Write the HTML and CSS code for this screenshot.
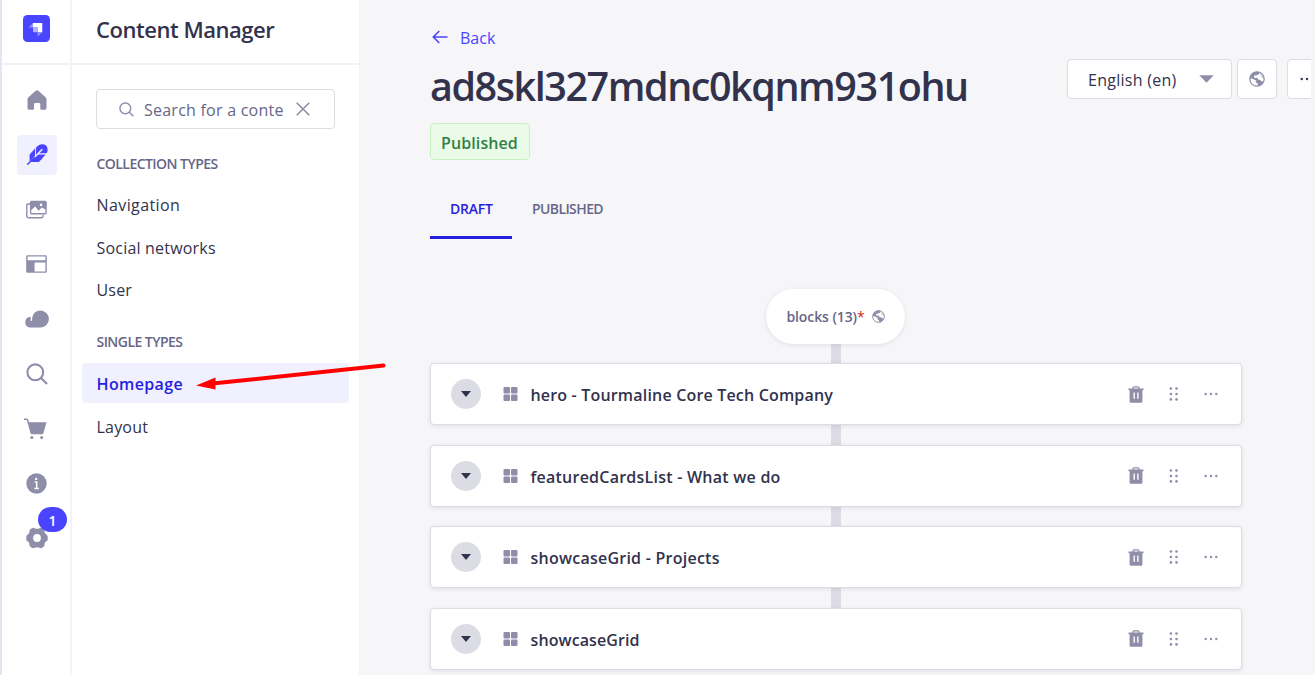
FILE: index.html
```html
<!DOCTYPE html>
<html lang="en">
<head>
<meta charset="utf-8">
<title>Content Manager</title>
<link rel="stylesheet" href="styles.css">
</head>
<body>
<svg class="sprite" aria-hidden="true">
  <symbol id="globe" viewBox="0 0 16 16"><circle cx="8" cy="8" r="7.2" fill="#fff" stroke="currentColor" stroke-width="1.2"/><path fill="currentColor" d="M1 9.200C.4 5 3.500.9 8 .7l2.500.6-.3 1.700-2.400 1.200-2.300.4-.8 1.500 1.200.9 2-.2 1.300 1.300-.4 1H5.900L3 7.600l-1.500-.2z"/><path fill="currentColor" d="M6.600 9.700l2-1.200 2.700.4 1 1.400 2.200.2-.9 2.200-2.700 2.100-2 .3-.3-2.500-1.800-1.300z"/><path fill="currentColor" d="M11.500 2l2.300 1.900 1.300 3.600-2.100-.3-1.500-2.200z" opacity=".35"/></symbol>
  <symbol id="grid" viewBox="0 0 14 14"><g fill="currentColor"><rect width="6.500" height="6.500" rx="1"/><rect x="7.500" width="6.500" height="6.500" rx="1"/><rect y="7.500" width="6.500" height="6.500" rx="1"/><rect x="7.500" y="7.500" width="6.500" height="6.500" rx="1"/></g></symbol>
  <symbol id="trash" viewBox="0 0 16 17"><path d="M5 3V1.800Q5 .8 6 .8h4q1 0 1 1V3" fill="none" stroke="currentColor" stroke-width="1.200"/><path fill="currentColor" fill-rule="evenodd" d="M.5 2.600h15v1.600h-1.100V15.500q0 1.300-1.200 1.300H2.800q-1.200 0-1.200-1.300V4.200H.5zM5.500 6.500v6.300h1.400V6.500zM9.200 6.500v6.300h1.400V6.500z"/></symbol>
  <symbol id="drag" viewBox="0 0 10 14"><g fill="currentColor"><circle cx="1.900" cy="1.500" r="1.300"/><circle cx="7.500" cy="1.500" r="1.300"/><circle cx="1.900" cy="7" r="1.300"/><circle cx="7.500" cy="7" r="1.300"/><circle cx="1.900" cy="12.400" r="1.300"/><circle cx="7.500" cy="12.400" r="1.300"/></g></symbol>
  <symbol id="dots" viewBox="0 0 14 4"><g fill="currentColor"><circle cx="1.700" cy="2" r="1.200"/><circle cx="7" cy="2" r="1.200"/><circle cx="12.300" cy="2" r="1.200"/></g></symbol>
  <symbol id="search" viewBox="0 0 22 22"><circle cx="9.300" cy="9.300" r="7.900" fill="none" stroke="currentColor" stroke-width="2.100"/><path d="M15 15l6 6" stroke="currentColor" stroke-width="2.100" fill="none"/></symbol>
</svg>
<div class="app">
  <nav class="rail">
    <div class="rail-logo">
      <svg width="27" height="27" viewBox="0 0 27 27"><rect width="27" height="27" rx="4.500" fill="#4945ff"/><path fill="#fff" d="M10 8h9.300v9.200h-4.700v-4.600H10z"/><path fill="#9593ff" d="M10 8v4.600H5.600zM14.600 17.200h4.700l-4.700 4.500z"/><path fill="#b3b1ff" d="M10 12.600h4.600v4.600H11q-1 0-1-1z"/></svg>
    </div>
    <div class="rail-items">
      <a class="rail-item"><svg width="20" height="20" viewBox="0 0 20 20"><path fill="currentColor" d="M8.700.8q1.300-1.100 2.600 0l7.300 6.400q.9.800.9 2V18q0 1.700-1.600 1.700h-3.400q-1.200 0-1.200-1.200v-4.200q0-1.300-1.300-1.300H8.300Q7 13 7 14.300v4.200q0 1.200-1.200 1.200H2Q.5 19.700.5 18V9.200q0-1.200.9-2z"/></svg></a>
      <a class="rail-item active"><svg width="21" height="21" viewBox="0 0 21 21"><path fill="currentColor" d="M2.600 17.500V10.500L8 4.500V12zM8.900 11.500V3.800C12 .2 15.500-.5 18.500 1c2.300 1.800 2.500 5 1.600 7.600l-1 .7h-7.700z"/><path fill="currentColor" d="M10.400 10.400h8.100l-3 3.700H6.700zM5.600 15.100h9L12 18H4z"/><path fill="currentColor" d="M8 13.500h8l-2 2.500H6z"/><path d="M8 12.700L15.300 5.300" stroke="#f0f0ff" stroke-width="1.500"/><path d="M.7 20.300L7 14" stroke="currentColor" stroke-width="1.500" stroke-linecap="round"/></svg></a>
      <a class="rail-item"><svg width="21" height="19" viewBox="0 0 21 19"><path d="M4 4H2Q.8 4 .8 5.200v11.100q0 1.400 1.400 1.400h13.400q1.400 0 1.400-1.400V15" fill="none" stroke="currentColor" stroke-width="1.400"/><path fill="currentColor" fill-rule="evenodd" d="M5.500.7h13.700q1.600 0 1.600 1.500v10.600q0 1.600-1.600 1.600H5.500q-1.600 0-1.600-1.600V2.200Q3.900.7 5.500.7zM5.300 10v3.100h14.100V9.600L16 7.500l-3.500 3.300L9.300 6.500zM15 3.600a1.300 1.300 0 1 0 .1 2.600 1.300 1.300 0 0 0-.1-2.600z"/></svg></a>
      <a class="rail-item"><svg width="21" height="18" viewBox="0 0 21 18"><path fill="currentColor" fill-rule="evenodd" d="M1.500.2h18q1.300 0 1.300 1.300v15q0 1.300-1.300 1.300h-18Q.2 17.800.2 16.500v-15Q.2.200 1.500.2zM1.600 1.600v3.600h17.800V1.600zM8.600 7.400v9h10.800v-9z"/></svg></a>
      <a class="rail-item"><svg width="24" height="18" viewBox="0 0 24 18"><path fill="currentColor" d="M5.500 17.600A5.300 5.300 0 0 1 4.600 7.100l1.200.1-.2 3.700 1.500-.1C6.800 4.500 10.300.4 15.300.4a8.600 8.600 0 0 1 0 17.200z"/></svg></a>
      <a class="rail-item"><svg width="22" height="22"><use href="#search"/></svg></a>
      <a class="rail-item cart"><svg width="23" height="22" viewBox="0 0 23 22"><path d="M0 1.300h2.500q.8 0 1 .8L4.500 5" fill="none" stroke="currentColor" stroke-width="1.500"/><path fill="currentColor" d="M3.500 4.200h19l-3.100 11q-.4 1-1.400 1H7.800q-1 0-1.300-1z"/><circle cx="7.800" cy="19.600" r="1.500" fill="currentColor"/><circle cx="17.700" cy="19.600" r="1.500" fill="currentColor"/></svg></a>
      <a class="rail-item"><svg width="21" height="21" viewBox="0 0 21 21"><circle cx="10.500" cy="10.500" r="10.200" fill="currentColor"/><path d="M8.700 9h2v6.200M8.400 15.400h4.500" fill="none" stroke="#fff" stroke-width="1.500"/><circle cx="10.200" cy="5.900" r="1.200" fill="#fff"/></svg></a>
      <a class="rail-item"><svg width="22" height="22" viewBox="0 0 22 22"><path fill="currentColor" fill-rule="evenodd" d="M6.500.9Q7.500.4 8.500 1.200q2.500 1.300 5 0 1-.8 2-.3l2.300 1.400q.8.600.6 1.800-.1 2.800 2.400 4 .9.500.9 1.500v2.800q0 1-.9 1.500-2.500 1.200-2.400 4 .2 1.200-.6 1.800l-2.300 1.400q-1 .5-2-.3-2.500-1.300-5 0-1 .8-2 .3L4.200 19.700q-.8-.6-.6-1.800.1-2.800-2.400-4-.9-.5-.9-1.500V9.600q0-1 .9-1.500 2.500-1.200 2.400-4-.2-1.200.6-1.800zM11 7.100a3.900 3.900 0 1 0 0 7.800 3.900 3.900 0 0 0 0-7.800z"/></svg><span class="badge">1</span></a>
    </div>
  </nav>
  <aside class="panel">
    <header class="panel-head"><h2>Content Manager</h2></header>
    <div class="search"><svg width="15" height="15"><use href="#search"/></svg><span>Search for a conte</span><svg width="14" height="14" viewBox="0 0 14 14"><path d="M.7.7l12.600 12.600M13.300.7L.7 13.300" stroke="currentColor" stroke-width="1.600"/></svg></div>
    <h3 class="group">COLLECTION TYPES</h3>
    <div class="links"><a class="l-nav">Navigation</a><a class="l-social">Social networks</a><a class="l-user">User</a></div>
    <h3 class="group single">SINGLE TYPES</h3>
    <div class="links"><a class="current">Homepage</a><a class="l-layout">Layout</a></div>
  </aside>
  <main class="main">
    <a class="back"><svg width="16" height="14" viewBox="0 0 16 14"><path d="M15.500 7H1.500M7.300 1L1.300 7l6 6" fill="none" stroke="currentColor" stroke-width="1.600"/></svg><span>Back</span></a>
    <div class="heading">
      <h1>ad8skl327mdnc0kqnm931ohu</h1>
      <div class="actions">
        <div class="box locale"><span>English (en)</span><svg width="15" height="8" viewBox="0 0 15 8"><path d="M.3.200h14.400L7.500 7.800z" fill="#8e8ea9"/></svg></div>
        <div class="box square"><svg width="16" height="16"><use href="#globe"/></svg></div>
        <div class="box more"><svg width="14" height="4"><use href="#dots"/></svg></div>
      </div>
    </div>
    <span class="status">Published</span>
    <div class="tabs"><span class="tab selected">DRAFT</span><span class="tab">PUBLISHED</span></div>
    <section class="zone">
      <div class="pill"><span>blocks (13)<b>*</b></span><svg width="13" height="13"><use href="#globe"/></svg></div>
      <div class="cards">
        <article class="card"><i class="toggle"></i><svg class="grid" width="15" height="14"><use href="#grid"/></svg><h4 class="t1">hero - Tourmaline Core Tech Company</h4><svg class="trash" width="16" height="17"><use href="#trash"/></svg><svg class="drag" width="10" height="14"><use href="#drag"/></svg><svg width="14" height="4"><use href="#dots"/></svg></article>
        <article class="card"><i class="toggle"></i><svg class="grid" width="15" height="14"><use href="#grid"/></svg><h4 class="t2">featuredCardsList - What we do</h4><svg class="trash" width="16" height="17"><use href="#trash"/></svg><svg class="drag" width="10" height="14"><use href="#drag"/></svg><svg width="14" height="4"><use href="#dots"/></svg></article>
        <article class="card"><i class="toggle"></i><svg class="grid" width="15" height="14"><use href="#grid"/></svg><h4 class="t3">showcaseGrid - Projects</h4><svg class="trash" width="16" height="17"><use href="#trash"/></svg><svg class="drag" width="10" height="14"><use href="#drag"/></svg><svg width="14" height="4"><use href="#dots"/></svg></article>
        <article class="card"><i class="toggle"></i><svg class="grid" width="15" height="14"><use href="#grid"/></svg><h4 class="t4">showcaseGrid</h4><svg class="trash" width="16" height="17"><use href="#trash"/></svg><svg class="drag" width="10" height="14"><use href="#drag"/></svg><svg width="14" height="4"><use href="#dots"/></svg></article>
      </div>
    </section>
  </main>
  <svg class="arrow" width="192" height="30" viewBox="0 0 192 30"><path d="M188.500 4.500L20 22.300" stroke="#fe0000" stroke-width="4" stroke-linecap="round"/><path d="M1 24.500L20.500 16.500V28.500z" fill="#fe0000"/></svg>
</div>
</body>
</html>
```
FILE: styles.css
```css
* { box-sizing: border-box; }
body { margin: 0; font-family: "Open Sans", "Noto Sans", sans-serif; font-size: 16px; color: #32324d; background: #f6f6f9; overflow: hidden; }
h1, h2, h3, h4 { margin: 0; font-weight: 600; white-space: nowrap; }
svg { display: block; flex: none; }
.sprite { width: 0; height: 0; position: absolute; }
.app { position: relative; display: flex; width: 1315px; height: 675px; overflow: hidden; }

.rail { width: 72px; flex: none; background: #fff; border-left: 2px solid #e3e6ee; border-right: 2px solid #f3f3f8; color: #8e8ea9; }
.rail-logo { height: 65px; padding: 15px 0 0 21px; border-bottom: 2px solid #f1f1f6; }
.rail-items { display: flex; flex-direction: column; gap: 14.750px; padding: 15px 0 0 15px; }
.rail-item { position: relative; display: flex; align-items: center; justify-content: center; width: 40px; height: 40px; padding-right: 1px; border-radius: 4px; }
.rail-item.active { padding-right: 0; height: 40px; background: #f0f0ff; color: #4945ff; }
.rail-item.cart { padding-right: 3px; }
.badge { position: absolute; left: 21px; top: -11px; width: 29px; height: 25px; border-radius: 13px; background: #4945ff; color: #fff; font-size: 14px; font-weight: 600; line-height: 28px; text-align: center; }

.panel { width: 288px; flex: none; background: #fff; border-right: 1px solid #f3f3f8; }
.panel-head { height: 65px; padding-left: 24px; border-bottom: 2px solid #f1f1f6; }
.panel-head h2 { font-size: 22px; line-height: 58px; letter-spacing: -.46px; }
.search { display: flex; align-items: center; width: 239px; height: 40px; margin: 24px 0 0 24px; padding-left: 22px; border: 1px solid #dcdce4; border-radius: 4px; color: #8e8ea9; }
.search span { width: 141px; margin: 0 11px 0 10px; padding-top: 2px; color: #666687; white-space: nowrap; letter-spacing: .24px; }
.group { margin-left: 24.500px; padding-top: 25px; font-size: 14px; line-height: 20px; color: #666687; letter-spacing: -.55px; }
.group.single { padding-top: 23px; }
.links { display: flex; flex-direction: column; gap: 2.500px; padding: 10px 10px 0; }
.links a { height: 40px; padding-left: 14.500px; line-height: 43px; border-radius: 4px; white-space: nowrap; letter-spacing: .2px; }
.links .l-nav { letter-spacing: .4px; }
.links .current { background: #f0f0ff; color: #271fe0; font-weight: 600; letter-spacing: .36px; line-height: 42px; }
.group.single + .links { padding-top: 11px; }

.main { width: 951px; flex: none; padding: 27px 0 0 70px; overflow: hidden; }
.back { display: flex; align-items: center; gap: 12px; height: 20px; padding-left: 2px; color: #4945ff; line-height: 22px; }
.back span { padding-top: 2px; }
.heading { display: flex; justify-content: space-between; height: 76px; }
.heading h1 { font-size: 39.500px; line-height: 78px; letter-spacing: -1.440px; }
.actions { display: flex; flex: none; width: 244px; padding-top: 12px; }
.box { display: flex; align-items: center; justify-content: center; height: 40px; flex: none; background: #fff; border: 1px solid #dcdce4; border-radius: 4px; color: #8e8ea9; }
.locale { width: 165px; justify-content: space-between; padding: 0 17px 0 20px; color: #32324d; white-space: nowrap; letter-spacing: .27px; }
.locale span { padding-top: 2px; }
.square { width: 40px; margin-left: 5px; }
.more { width: 40px; margin-left: 10px; color: #32324d; }
.status { display: block; width: 100px; height: 37px; border: 1px solid #c6f0c2; border-radius: 4px; background: #eafbe7; color: #328048; font-weight: 600; line-height: 38px; padding-left: 10px; letter-spacing: .1px; }
.tabs { display: flex; margin-top: 19px; height: 60px; font-size: 14px; font-weight: 600; line-height: 60px; color: #666687; letter-spacing: -.6px; }
.tab { padding: 0 20px; }
.tab.selected { width: 82px; color: #271fe0; border-bottom: 3px solid #271fe0; letter-spacing: -.25px; }
.zone { display: flex; flex-direction: column; width: 811px; margin-top: 50px; background: linear-gradient(#dcdce4, #dcdce4) 401px 30px / 10px 400px no-repeat; }
.pill { display: flex; align-items: center; align-self: center; justify-content: center; gap: 7px; width: 139px; height: 55px; border-radius: 28px; background: #fff; box-shadow: 0 1px 4px rgba(33,33,52,.1); color: #666687; font-size: 14px; font-weight: 600; letter-spacing: -.08px; line-height: 17px; padding-bottom: 1px; }
.pill b { color: #d02b20; font-weight: 400; }
.pill svg, .square svg { color: #8e8ea9; }
.cards { display: flex; flex-direction: column; gap: 19.670px; width: 811.500px; margin-top: 19px; }
.card { display: flex; align-items: center; height: 62px; padding: 0 23px 0 20px; background: #fff; border: 1px solid #dcdce4; border-radius: 4px; box-shadow: 0 1px 4px rgba(33,33,52,.1); color: #8e8ea9; }
.toggle { display: flex; align-items: center; justify-content: center; width: 30px; height: 30px; border-radius: 50%; background: #dcdce4; }
.toggle::before { content: ""; border: 5.500px solid transparent; border-top: 6px solid #32324d; border-bottom: 0; }
.grid { margin: 0 12.500px 0 22px; }
.card h4 { flex: 1; font-size: 16px; line-height: 24px; color: #32324d; padding-top: 2px; letter-spacing: .18px; }
.card .t2, .card .t3 { letter-spacing: .24px; }
.card .t4 { letter-spacing: .1px; }
.trash { margin-right: 25px; }
.drag { margin-right: 25px; }
.arrow { position: absolute; left: 195px; top: 361px; }
```
